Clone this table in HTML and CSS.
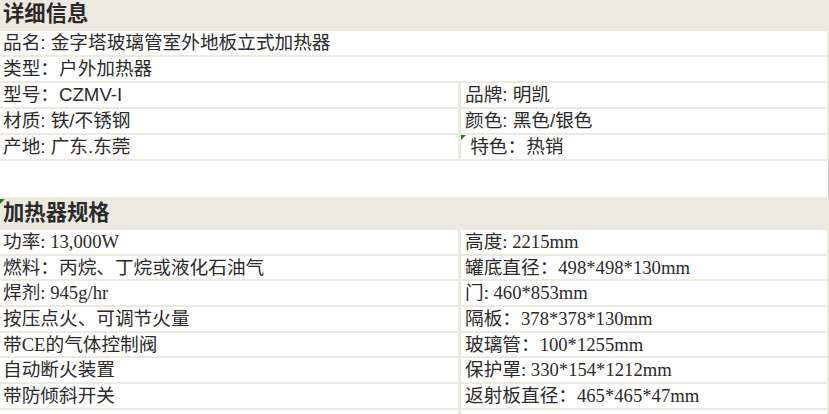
FILE: index.html
```html
<!DOCTYPE html>
<html lang="zh-CN">
<head>
<meta charset="utf-8">
<title>详细信息</title>
<link rel="stylesheet" href="styles.css">
</head>
<body>
<div class="sheet">
  <div class="section-title marked">详细信息</div>
  <div class="row full"><div class="cell">品名: 金字塔玻璃管室外地板立式加热器</div></div>
  <div class="row full"><div class="cell">类型：户外加热器</div></div>
  <div class="row"><div class="cell">型号：<span class="latin">CZMV-I</span></div><div class="cell right">品牌: 明凯</div></div>
  <div class="row"><div class="cell">材质: 铁/不锈钢</div><div class="cell right">颜色: 黑色/银色</div></div>
  <div class="row"><div class="cell">产地: 广东.东莞</div><div class="cell right flag">&nbsp;特色：热销</div></div>
  <div class="spacer"></div>
  <div class="section-title flag">加热器规格</div>
  <div class="specs">
    <div class="row"><div class="cell">功率: 13,000W</div><div class="cell right">高度: 2215mm</div></div>
    <div class="row"><div class="cell">燃料：丙烷、丁烷或液化石油气</div><div class="cell right">罐底直径：498*498*130mm</div></div>
    <div class="row"><div class="cell">焊剂: 945g/hr</div><div class="cell right">门: 460*853mm</div></div>
    <div class="row"><div class="cell">按压点火、可调节火量</div><div class="cell right">隔板：378*378*130mm</div></div>
    <div class="row"><div class="cell">带CE的气体控制阀</div><div class="cell right">玻璃管：100*1255mm</div></div>
    <div class="row"><div class="cell">自动断火装置</div><div class="cell right">保护罩: 330*154*1212mm</div></div>
    <div class="row"><div class="cell">带防倾斜开关</div><div class="cell right">返射板直径：465*465*47mm</div></div>
    <div class="row"><div class="cell"></div><div class="cell right"></div></div>
  </div>
</div>
</body>
</html>
```

FILE: styles.css
```css
html, body {
  margin: 0;
  padding: 0;
  background: #ffffff;
}

body {
  width: 829px;
  height: 414px;
  overflow: hidden;
  color: #2b2b2b;
  font-family: "Liberation Sans", "Noto Sans CJK SC", sans-serif;
  font-size: 18.67px;
}

.sheet {
  display: flex;
  flex-direction: column;
  gap: 2px;
  background: #ecE9e0;
}

.section-title {
  height: 29px;
  line-height: 29px;
  padding-left: 3px;
  font-size: 21.33px;
  font-weight: bold;
  color: #2a2a2a;
  background: #ece9e0;
  position: relative;
}

.row {
  display: grid;
  grid-template-columns: 458px 1fr;
  column-gap: 3px;
  margin-right: 2px;
  height: 24px;
}

.row.full {
  grid-template-columns: 1fr;
}

.cell {
  background: #ffffff;
  padding-left: 3px;
  line-height: 24px;
  white-space: nowrap;
  overflow: hidden;
  position: relative;
}

.cell.right {
  padding-left: 4px;
}

.latin {
  font-family: "Liberation Sans", sans-serif;
}

.spacer {
  height: 36px;
  background: #ffffff;
  border-right: 1px solid #c9c9c9;
}

.specs {
  display: flex;
  flex-direction: column;
  gap: 2px;
  font-family: "Liberation Serif", "Noto Sans CJK SC", serif;
}

.specs .row {
  height: 23.7px;
}

.specs .cell {
  line-height: 23.7px;
}

.flag::before {
  content: "";
  position: absolute;
  left: 0;
  top: 0;
  width: 0;
  height: 0;
  border-top: 5px solid #1e7d1e;
  border-right: 5px solid transparent;
}
```
